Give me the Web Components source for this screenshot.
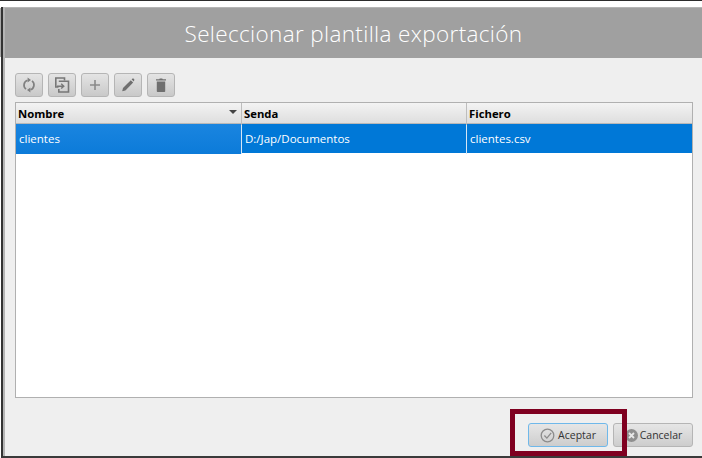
<!DOCTYPE html>
<html><head><meta charset="utf-8"><style>
html,body{margin:0;padding:0;background:#fff;overflow:hidden}
body{width:702px;height:458px;font-family:"Open Sans","Noto Sans",sans-serif}
</style></head><body>
<app-window>
  <dialog-header>Seleccionar plantilla exportación</dialog-header>
  <tool-bar>
    <icon-btn icon="sync"></icon-btn><icon-btn icon="copy"></icon-btn><icon-btn icon="plus"></icon-btn><icon-btn icon="pencil"></icon-btn><icon-btn icon="trash"></icon-btn>
  </tool-bar>
  <data-table></data-table>
  <dialog-footer>
    <action-btn icon="check" focus>Aceptar</action-btn>
    <action-btn icon="cross">Cancelar</action-btn>
  </dialog-footer>
</app-window>
<script>
const def=(n,html,init)=>customElements.define(n,class extends HTMLElement{constructor(){super();this.attachShadow({mode:'open'}).innerHTML=typeof html==='function'?html(this):html;}connectedCallback(){if(init)init(this)}});
const icons={
sync:'<path d="M7.5 4.2A5.2 5.2 0 0 0 6 13.2M10.5 13.8A5.2 5.2 0 0 0 12 4.8" fill="none" stroke="#808080" stroke-width="1.7"/><path d="M7.6 1.6V6.6L11 4.1ZM10.4 11.4V16.4L7 13.9Z" fill="#808080"/>',
copy:'<path d="M11.5 4.5V2H2.8V11H5.5" fill="none" stroke="#777" stroke-width="1.6"/><path d="M5.8 5.2H15.5V16H5.8V13" fill="none" stroke="#777" stroke-width="1.6"/><path d="M4 10.2H10.5M8.2 7.8L10.8 10.2L8.2 12.6" fill="none" stroke="#777" stroke-width="1.4"/>',
plus:'<path d="M9 4V14M4 9H14" stroke="#8a8a8a" stroke-width="1.6" fill="none"/>',
pencil:'<path d="M3.2 15.2L4 12L11.8 4.2L14.2 6.6L6.4 14.4Z" fill="#6f6f6f"/><path d="M12.6 3.4L13.5 2.6Q14 2.2 14.5 2.6L15.2 3.3Q15.6 3.8 15.2 4.3L14.9 5.5Z" fill="#6f6f6f"/>',
trash:'<path d="M4.8 5.6H13.2V15.2Q13.2 16 12.4 16H5.6Q4.8 16 4.8 15.2Z" fill="#6f6f6f"/><path d="M4 3.2H7.2L7.8 2.4H10.2L10.8 3.2H14V4.6H4Z" fill="#6f6f6f"/>'
};
def('app-window',`<style>:host{display:flex;flex-direction:column;box-sizing:border-box;width:702px;height:458px;padding-top:1px;background:#fff;position:relative}
.top{height:1px;background:#2b2b2b;position:absolute;left:0;right:0;top:0}
.sliver{position:absolute;left:0;top:8px;width:1px;height:49px;background:#a8a8a8}
.frame{flex:1;display:flex;flex-direction:column;margin:6px 0 0 1px;border-left:2px solid #333;border-bottom:2px solid #3a3a3a;min-height:0}
.inner{flex:1;display:flex;flex-direction:column;background:#efefef;border-left:2px solid #b5b5b5;border-top:1px solid #b5b5b5;min-height:0}</style>
<div class="top"></div><div class="sliver"></div><div class="frame"><div class="inner"><slot></slot></div></div>`);
def('dialog-header',`<style>:host{display:flex;align-items:center;justify-content:center;height:50px;background:#a0a0a0;color:#fff;font:300 22.5px "Open Sans",sans-serif;letter-spacing:.35px;box-sizing:border-box}</style><slot></slot>`);
def('tool-bar',`<style>:host{display:flex;gap:5px;padding:15px 0 0 10px;height:24px}</style><slot></slot>`);
def('icon-btn',el=>`<style>:host{display:flex;align-items:center;justify-content:center;width:28px;height:24px;box-sizing:border-box;border:1px solid #b5b5b5;border-radius:3px;background:linear-gradient(#e4e4e4,#c9c9c9)}svg{width:18px;height:18px}</style><svg viewBox="0 0 18 18">${icons[el.getAttribute('icon')]}</svg>`);
def('data-table',`<style>:host{display:block;margin:5px 9px 0 10px;height:296px;box-sizing:border-box;border:1px solid #b0b0b0;background:#fff;font:11.5px "Open Sans",sans-serif}
.row{display:grid;grid-template-columns:226px 225px 1fr}
.head{height:20px;background:linear-gradient(#f3f3f3,#dedede);border-bottom:1px solid #b8b8b8;font-weight:700;font-size:11.3px;color:#000;line-height:22px}
.head>div{padding-left:2px;border-right:1px solid #bdbdbd;position:relative}
.head>div:last-child{border:0}
.arr{position:absolute;right:4px;top:7px;width:0;height:0;border:4px solid transparent;border-top:4px solid #444;border-bottom:0}
.sel{height:29px;background:#0078d7;color:#fff;line-height:30px}
.sel>div{padding-left:3px;border-right:1px solid #d5e6f5}
.sel>div:first-child{background:linear-gradient(#1a85e0,#0c7bd9)}
.sel>div:last-child{border:0}</style>
<div class="row head"><div>Nombre<span class="arr"></span></div><div>Senda</div><div>Fichero</div></div>
<div class="row sel"><div>clientes</div><div>D:/Jap/Documentos</div><div>clientes.csv</div></div>`);
def('dialog-footer',`<style>:host{display:flex;justify-content:flex-end;gap:5px;padding:25px 9px 0 0;position:relative}
.mark{position:absolute;left:505px;top:11px;width:117px;height:47px;box-sizing:border-box;border:5px solid #7f0020;pointer-events:none}</style><slot></slot><div class="mark"></div>`);
def('action-btn',el=>{const f=el.hasAttribute('focus');const c=el.getAttribute('icon')==='check';const ic=c
?'<circle cx="7.5" cy="7.5" r="6.3" fill="none" stroke="#8c8c8c" stroke-width="1.3"/><path d="M4.4 7.5L6.9 10.1L11.2 4.8" fill="none" stroke="#8c8c8c" stroke-width="1.3"/>'
:'<circle cx="7.5" cy="7.5" r="6.5" fill="#8f8f8f"/><path d="M5 5L10 10M10 5L5 10" stroke="#e8e8e8" stroke-width="1.8"/>';
return `<style>:host{display:flex;align-items:center;justify-content:center;gap:${c?3:1}px;width:80px;height:24px;box-sizing:border-box;border:1px solid ${f?'#6fb8ea':'#b5b5b5'};border-radius:3px;background:linear-gradient(#e6e6e6,#cdcdcd);font:10.5px "Open Sans",sans-serif;color:#333}svg{width:15px;height:15px}</style><svg viewBox="0 0 15 15">${ic}</svg><slot></slot>`});
</script></body></html>
